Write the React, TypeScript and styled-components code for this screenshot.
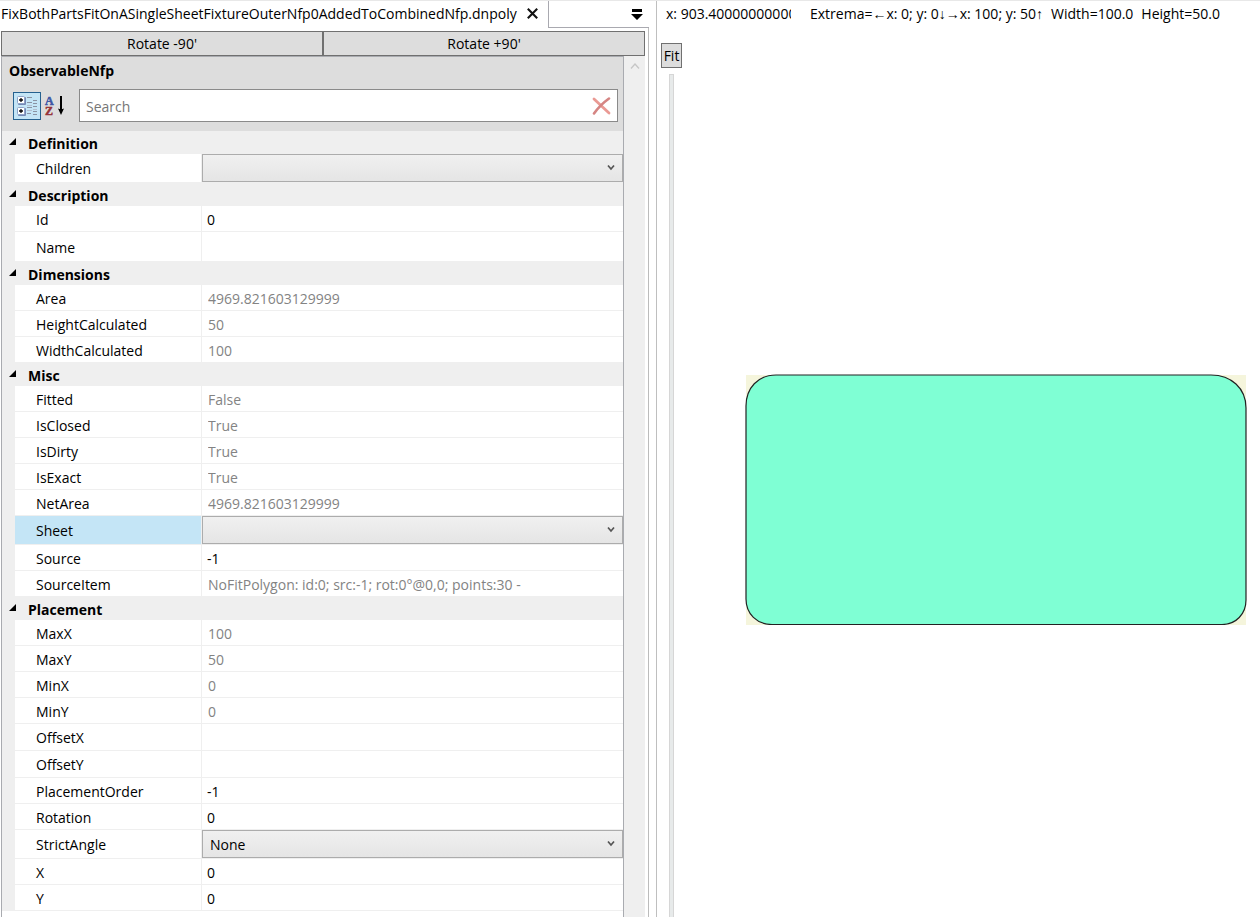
import React from "react";
import styled, { createGlobalStyle } from "styled-components";

const GlobalStyle = createGlobalStyle`
  *, *::before, *::after { box-sizing: border-box; }
  body { margin: 0; background: #fff; }
  body, button, input, select {
    font-family: "Open Sans", "Noto Sans", sans-serif;
    font-size: 14px;
    color: #000;
  }
`;

const Window = styled.div`
  display: grid;
  grid-template-columns: minmax(0, 649fr) 8px minmax(0, 603fr);
  min-height: 100vh;
  border-top: 1px solid #e8e8e8;
`;

const Splitter = styled.div`
  border-right: 1px solid #bfbfbf;
`;

const DocumentPane = styled.main`
  display: flex;
  flex-direction: column;
`;

const TabStrip = styled.header`
  display: flex;
  height: 27px;
`;

const Tab = styled.div`
  display: flex;
  align-items: center;
  gap: 10px;
  padding: 0 10px 2px 1px;
  border-right: 1px solid #a9a9b0;
  white-space: nowrap;
`;

const TabRest = styled.div`
  flex: 1;
  display: flex;
  align-items: center;
  justify-content: flex-end;
  padding-right: 6px;
  border-bottom: 1px solid #a9a9b0;
`;

const IconButton = styled.button`
  display: flex;
  padding: 0;
  border: 0;
  background: none;
`;

const DocumentBody = styled.div`
  flex: 1;
  display: flex;
  flex-direction: column;
  padding: 3px 3px 0 1px;
  border-right: 1px solid #bcbcbc;
`;

const ButtonRow = styled.div`
  display: grid;
  grid-template-columns: 1fr 1fr;
`;

const PushButton = styled.button`
  height: 25px;
  padding: 0 2px;
  border: 1px solid #707070;
  background: #ddd;
  line-height: 20px;
`;

const ScrollArea = styled.div`
  flex: 1;
  display: grid;
  grid-template-columns: minmax(0, 1fr) 21px;
`;

const PropertyGrid = styled.section`
  border: solid #a9abb0;
  border-width: 1px 1px 0;
`;

const GridHeader = styled.div`
  height: 74px;
  padding: 4px 5px 0 7px;
  background: #ddd;
`;

const GridTitle = styled.h1`
  margin: 0 0 8px;
  font-size: 14px;
  line-height: 20px;
`;

const Tools = styled.div`
  display: flex;
  align-items: center;
  height: 33px;
  padding-left: 4px;
`;

const ToolToggle = styled.button<{ $on?: boolean }>`
  display: flex;
  align-items: center;
  justify-content: center;
  width: 28px;
  height: 28px;
  padding: 0;
  border: 1px solid ${(p) => (p.$on ? "#26618f" : "transparent")};
  background: ${(p) => (p.$on ? "#c4e5f6" : "none")};
`;

const SearchBox = styled.div`
  flex: 1;
  display: flex;
  align-items: center;
  height: 33px;
  margin-left: 10px;
  padding: 1px 6px 0;
  border: 1px solid #8a8a8a;
  background: #fff;
`;

const SearchInput = styled.input`
  flex: 1;
  min-width: 0;
  padding: 0;
  border: 0;
  outline: 0;
  &::placeholder { color: #767676; opacity: 1; }
`;

const Group = styled.section`
  background: #efefef;
`;

const GroupTitle = styled.h2`
  display: flex;
  align-items: center;
  gap: 11px;
  height: 23px;
  margin: 0;
  padding: 2px 0 0 7px;
  font-size: 14px;
  line-height: 20px;
  & > svg { margin-bottom: 4px; }
`;

const Row = styled.div<{ $height: number; $selected?: boolean }>`
  display: grid;
  grid-template-columns: 186px minmax(0, 1fr);
  gap: 1px;
  height: ${(p) => p.$height}px;
  margin-left: 13px;
  border-bottom: 1px solid #efefef;
  & > label { background: ${(p) => (p.$selected ? "#c4e5f6" : "#fff")}; }
`;

const RowLabel = styled.label`
  display: flex;
  align-items: center;
  padding: 1px 0 0 21px;
`;

const ValueInput = styled.input`
  min-width: 0;
  height: 100%;
  padding: 1px 0 0 5px;
  border: 0;
  outline: 0;
  background: #fff;
  &:read-only { padding-left: 6px; color: #838383; }
`;

const SelectWrap = styled.div`
  display: grid;
  align-items: center;
  & > * { grid-area: 1 / 1; }
  & > svg { justify-self: end; margin-right: 8px; pointer-events: none; }
`;

const ValueSelect = styled.select`
  appearance: none;
  width: 100%;
  height: 100%;
  padding: 1px 24px 0 7px;
  border: 1px solid #acacac;
  border-radius: 0;
  background: linear-gradient(#f0f0f0, #e5e5e5);
`;

const ScrollBar = styled.div`
  display: flex;
  flex-direction: column;
  align-items: center;
  padding-top: 6px;
  background: #efefef;
`;

const ViewPane = styled.aside`
  display: flex;
  flex-direction: column;
`;

const StatusLine = styled.div`
  display: flex;
  gap: 19px;
  height: 42px;
  padding: 3px 9px 0;
  line-height: 20px;
  white-space: nowrap;
`;

const Cursor = styled.span`
  width: 125px;
  overflow: hidden;
`;

const Extrema = styled.span`
  display: flex;
  gap: 8px;
`;

const ViewBody = styled.div`
  flex: 1;
  display: flex;
`;

const ZoomColumn = styled.div`
  display: flex;
  flex-direction: column;
  align-items: center;
  gap: 6px;
  width: 29px;
`;

const ZoomSlider = styled.input`
  flex: 1;
  appearance: none;
  writing-mode: vertical-lr;
  width: 5px;
  margin: 0;
  border: 1px solid #d6d6d6;
  border-bottom: 0;
  background: #e7eaea;
  &::-webkit-slider-thumb { appearance: none; width: 0; height: 0; }
`;

const Canvas = styled.div`
  flex: 1;
  padding: 331px 13px 0 59px;
`;

const Drawing = styled.svg`
  display: block;
  width: 100%;
`;

type Kind = "edit" | "read" | "select";
type Item = { name: string; value?: string; kind?: Kind; height?: number; selected?: boolean };

const groups: { title: string; items: Item[] }[] = [
  { title: "Definition", items: [{ name: "Children", kind: "select" }] },
  {
    title: "Description",
    items: [
      { name: "Id", value: "0", kind: "edit" },
      { name: "Name", kind: "edit", height: 30 },
    ],
  },
  {
    title: "Dimensions",
    items: [
      { name: "Area", value: "4969.821603129999" },
      { name: "HeightCalculated", value: "50" },
      { name: "WidthCalculated", value: "100" },
    ],
  },
  {
    title: "Misc",
    items: [
      { name: "Fitted", value: "False" },
      { name: "IsClosed", value: "True" },
      { name: "IsDirty", value: "True" },
      { name: "IsExact", value: "True" },
      { name: "NetArea", value: "4969.821603129999" },
      { name: "Sheet", kind: "select", selected: true },
      { name: "Source", value: "-1", kind: "edit" },
      { name: "SourceItem", value: "NoFitPolygon: id:0; src:-1; rot:0°@0,0; points:30 -" },
    ],
  },
  {
    title: "Placement",
    items: [
      { name: "MaxX", value: "100" },
      { name: "MaxY", value: "50" },
      { name: "MinX", value: "0" },
      { name: "MinY", value: "0" },
      { name: "OffsetX", height: 27 },
      { name: "OffsetY", height: 27 },
      { name: "PlacementOrder", value: "-1", kind: "edit" },
      { name: "Rotation", value: "0", kind: "edit" },
      { name: "StrictAngle", value: "None", kind: "select" },
      { name: "X", value: "0", kind: "edit" },
      { name: "Y", value: "0", kind: "edit" },
    ],
  },
];

function PropertyRow({ name, value = "", kind = "read", height, selected }: Item) {
  const id = `prop-${name}`;
  return (
    <Row $height={height ?? (kind === "select" ? 29 : 26)} $selected={selected}>
      <RowLabel htmlFor={id}>{name}</RowLabel>
      {kind === "select" ? (
        <SelectWrap>
          <ValueSelect id={id} defaultValue={value}>
            <option value={value}>{value}</option>
          </ValueSelect>
          <svg width="8" height="8" viewBox="0 0 8 8" aria-hidden="true">
            <path d="M1 1.5 4 5 7 1.5" fill="none" stroke="#555" strokeWidth="1.7" />
          </svg>
        </SelectWrap>
      ) : (
        <ValueInput id={id} type="text" defaultValue={value} readOnly={kind === "read"} />
      )}
    </Row>
  );
}

function CategoryIcon() {
  return (
    <svg width="22" height="22" viewBox="0 0 22 22" aria-hidden="true">
      {[1, 12].map((y) => (
        <g key={y}>
          <rect x="2" y={y + 1} width="8" height="8" rx="1" fill="#7488b4" />
          <rect x="1.5" y={y + 0.5} width="7" height="7" rx="1" fill="#fff" stroke="#8fa3c8" />
          <path d={`M3 ${y + 4}h4M5 ${y + 2}v4`} stroke="#111" strokeWidth="1.3" />
          <path d={`M4 ${y + 4}l1-1 1 1-1 1z`} fill="#111" />
        </g>
      ))}
      <path
        d="M11 2.5h5M11 7.5h5M11 12.5h5M11 18.5h4M17 5.5h4M17 8.5h4M17 11.5h4M17 16.5h4M17 19.5h4"
        stroke="#8a93a3"
      />
      <path d="M11 10.5h5M11 15.5h5M17 14.5h4" stroke="#b3bfd0" />
    </svg>
  );
}

function SortIcon() {
  return (
    <svg width="22" height="22" viewBox="0 0 22 22" aria-hidden="true">
      <g fontFamily="Liberation Serif, serif" fontWeight="700" fontSize="12" strokeWidth="0.5">
        <text x="1" y="10" fill="#3e57a5" stroke="#3e57a5">A</text>
        <text x="1" y="20" fill="#963338" stroke="#963338">Z</text>
      </g>
      <path d="M17 1v15" stroke="#000" strokeWidth="2" />
      <path d="M14 13.500Q17 15 20 13.500L17 20z" fill="#000" />
    </svg>
  );
}

export default function App() {
  return (
    <>
      <GlobalStyle />
      <Window>
        <DocumentPane>
          <TabStrip>
            <Tab>
              FixBothPartsFitOnASingleSheetFixtureOuterNfp0AddedToCombinedNfp.dnpoly
              <IconButton aria-label="Close tab">
                <svg width="11" height="11" viewBox="0 0 11 11" aria-hidden="true">
                  <path d="M.8.8 10.2 10.2M10.2.8.8 10.2" stroke="#111" strokeWidth="2.100" />
                </svg>
              </IconButton>
            </Tab>
            <TabRest>
              <IconButton aria-label="Open documents">
                <svg width="12" height="11" viewBox="0 0 12 11" aria-hidden="true">
                  <path d="M1 0h10v3H1zM0 5h12L6 11z" />
                </svg>
              </IconButton>
            </TabRest>
          </TabStrip>
          <DocumentBody>
            <ButtonRow>
              <PushButton>Rotate -90'</PushButton>
              <PushButton>Rotate +90'</PushButton>
            </ButtonRow>
            <ScrollArea>
              <PropertyGrid>
                <GridHeader>
                  <GridTitle>ObservableNfp</GridTitle>
                  <Tools>
                    <ToolToggle $on aria-label="Categorized" aria-pressed="true">
                      <CategoryIcon />
                    </ToolToggle>
                    <ToolToggle aria-label="Alphabetical" aria-pressed="false">
                      <SortIcon />
                    </ToolToggle>
                    <SearchBox>
                      <SearchInput type="text" placeholder="Search" aria-label="Search" />
                      <IconButton aria-label="Clear search">
                        <svg width="19" height="18" viewBox="0 0 19 18" aria-hidden="true">
                          <path d="M2 2 17 16" stroke="#ea9a94" strokeWidth="2.8" strokeLinecap="round" />
                          <path d="M17 1.5Q8 8 2 16.500" fill="none" stroke="#d58583" strokeWidth="2.6" strokeLinecap="round" />
                        </svg>
                      </IconButton>
                    </SearchBox>
                  </Tools>
                </GridHeader>
                {groups.map((group) => (
                  <Group key={group.title}>
                    <GroupTitle>
                      <svg width="8" height="7" viewBox="0 0 8 7" aria-hidden="true">
                        <path d="M7 0v7H0z" />
                      </svg>
                      {group.title}
                    </GroupTitle>
                    {group.items.map((item) => (
                      <PropertyRow key={item.name} {...item} />
                    ))}
                  </Group>
                ))}
              </PropertyGrid>
              <ScrollBar>
                <svg width="10" height="8" viewBox="0 0 10 8" aria-hidden="true">
                  <path d="M1 6.5 5 2l4 4.500" fill="none" stroke="#c6c6c6" strokeWidth="1.3" />
                </svg>
              </ScrollBar>
            </ScrollArea>
          </DocumentBody>
        </DocumentPane>
        <Splitter />
        <ViewPane>
          <StatusLine>
            <Cursor>x: 903.4000000000001</Cursor>
            <Extrema>
              <span>Extrema=←x: 0; y: 0↓→x: 100; y: 50↑</span>
              <span>Width=100.0</span>
              <span>Height=50.0</span>
            </Extrema>
          </StatusLine>
          <ViewBody>
            <ZoomColumn>
              <PushButton>Fit</PushButton>
              <ZoomSlider type="range" aria-label="Zoom" />
            </ZoomColumn>
            <Canvas>
              <Drawing viewBox="0 0 502 251" role="img" aria-label="Part outline">
                <rect x="1" y="1" width="500" height="250" fill="#f5f5dc" />
                <path
                  d="M31 1H466C486 1 501 14 501 34V226C501 240 491 250.500 477 250.500H27C12 250.500 1 240 1 225V32C1 14 13 1 31 1Z"
                  fill="#7fffd4"
                  stroke="#222"
                  strokeWidth="1.200"
                />
              </Drawing>
            </Canvas>
          </ViewBody>
        </ViewPane>
      </Window>
    </>
  );
}
